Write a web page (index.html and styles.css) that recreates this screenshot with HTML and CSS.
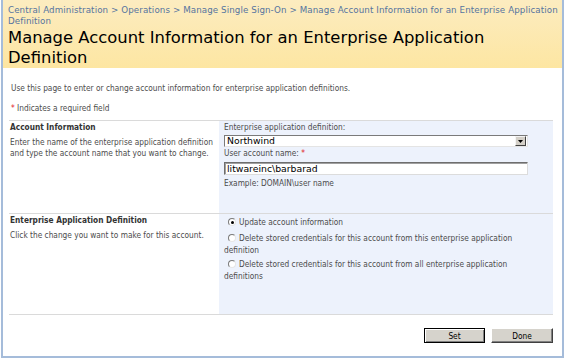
FILE: index.html
```html
<!DOCTYPE html>
<html>
<head>
<meta charset="utf-8">
<link rel="stylesheet" href="styles.css">
</head>
<body>
<div class="frame">
  <div class="header">
    <div class="crumbs">Central Administration &gt; Operations &gt; Manage Single Sign-On &gt; Manage Account Information for an Enterprise Application Definition</div>
    <h1 class="title">Manage Account Information for an Enterprise Application Definition</h1>
  </div>
  <div class="content">
    <p class="intro">Use this page to enter or change account information for enterprise application definitions.</p>
    <p class="req"><span class="star">*</span> Indicates a required field</p>
    <div class="section s1">
      <div class="desc">
        <div class="sec-title">Account Information</div>
        <div class="sec-text">Enter the name of the enterprise application definition and type the account name that you want to change.</div>
      </div>
      <div class="ctrl">
        <div class="lbl">Enterprise application definition:</div>
        <div class="select"><span class="sel-val">Northwind</span><span class="sel-btn"><svg width="5" height="3" viewBox="0 0 5 3"><path d="M0 0h5L2.5 3z" fill="#000"/></svg></span></div>
        <div class="lbl lbl2">User account name: <span class="star">*</span></div>
        <div class="input">litwareinc\barbarad</div>
        <div class="lbl ex">Example: DOMAIN\user name</div>
      </div>
    </div>
    <div class="section s2">
      <div class="desc">
        <div class="sec-title">Enterprise Application Definition</div>
        <div class="sec-text">Click the change you want to make for this account.</div>
      </div>
      <div class="ctrl radios">
        <div class="opt"><span class="radio on"></span>Update account information</div>
        <div class="opt opt2"><span class="radio"></span>Delete stored credentials for this account from this enterprise application definition</div>
        <div class="opt opt3"><span class="radio"></span>Delete stored credentials for this account from all enterprise application definitions</div>
      </div>
    </div>
    <div class="buttons">
      <button class="btn default">Set</button>
      <button class="btn">Done</button>
    </div>
  </div>
</div>
</body>
</html>
```

FILE: styles.css
```css
html, body {
  margin: 0;
  padding: 0;
  background: #fff;
}
body {
  width: 566px;
  height: 360px;
  overflow: hidden;
  font-family: "DejaVu Sans Condensed", "DejaVu Sans", sans-serif;
  font-size: 8.25px;
  color: #4c4c4c;
}
.frame {
  margin: 0 2px 0 1px;
  height: 356px;
  border: 2px solid #a5bcda;
  border-top: none;
  display: flex;
  flex-direction: column;
}
.header {
  background: linear-gradient(to bottom, #fcecc0, #fde6a2);
  padding: 5px 2px 1px 5px;
  height: 62px;
}
.crumbs {
  font-family: "DejaVu Sans", sans-serif;
  font-size: 8.7px;
  line-height: 10.5px;
  color: #55749f;
  letter-spacing: 0.1px;
}
.title {
  margin: 2px 0 0 0;
  font-family: "DejaVu Sans", sans-serif;
  font-weight: normal;
  font-size: 16.4px;
  line-height: 20px;
  color: #000;
}
.content {
  padding: 0 9px 0 6px;
  flex: 1;
}
.intro {
  margin: 15px 0 0 2px;
  line-height: 10px;
}
.req {
  margin: 10px 0 0 2px;
  line-height: 10px;
}
.star {
  color: #e0191f;
}
.section {
  display: grid;
  grid-template-columns: 210px 1fr;
  border-top: 1px solid #dadada;
}
.s1 {
  margin-top: 7px;
  height: 92px;
}
.s2 {
  height: 100px;
  border-bottom: 1px solid #dadada;
}
.desc {
  padding: 1px 0 0 1px;
}
.sec-title {
  font-weight: bold;
  color: #333;
  line-height: 11px;
}
.sec-text {
  margin-top: 4px;
  line-height: 11px;
  width: 208px;
}
.ctrl {
  background: #edf2fc;
  padding: 1px 25px 0 5px;
}
.lbl {
  line-height: 11px;
}
.select {
  margin-top: 2px;
  height: 10px;
  border: 1px solid;
  border-color: #7a7a7a #e4e4e4 #e4e4e4 #7a7a7a;
  background: #fff;
  display: flex;
  align-items: center;
  justify-content: space-between;
  padding-left: 2px;
}
.sel-val {
  font-family: "DejaVu Sans", sans-serif;
  font-size: 9.3px;
  line-height: 10px;
  color: #000;
}
.sel-btn {
  width: 9px;
  height: 8px;
  margin-right: 1px;
  background: #d4d0c8;
  border: 1px solid;
  border-color: #f4f4f4 #404040 #404040 #f4f4f4;
  display: flex;
  align-items: center;
  justify-content: center;
}
.lbl2 {
  margin-top: 1px;
}
.input {
  margin-top: 3px;
  height: 11px;
  border: 1px solid;
  border-color: #6e6e6e #dcdcdc #dcdcdc #6e6e6e;
  box-shadow: inset 1px 1px 0 #a0a0a0;
  background: #fff;
  padding-left: 2px;
  font-family: "DejaVu Sans", sans-serif;
  font-size: 9.3px;
  line-height: 11px;
  color: #000;
}
.ex {
  margin-top: 3px;
}
.radios {
  padding: 2px 20px 0 5px;
}
.opt {
  line-height: 12px;
}
.opt2 {
  margin-top: 4px;
}
.opt3 {
  margin-top: 2px;
}
.radio {
  display: inline-block;
  box-sizing: border-box;
  width: 8px;
  height: 8px;
  margin: 0 3px 0 4px;
  border-radius: 50%;
  border: 1px solid;
  border-color: #7a7a7a #e6e6e6 #e6e6e6 #7a7a7a;
  background: #fff;
  vertical-align: -1px;
  position: relative;
}
.radio.on::after {
  content: "";
  position: absolute;
  left: 1.5px;
  top: 1.5px;
  width: 3px;
  height: 3px;
  border-radius: 50%;
  background: #000;
}
.buttons {
  display: flex;
  justify-content: flex-end;
  gap: 6px;
  margin-top: 13px;
}
.btn {
  font-family: "DejaVu Sans Condensed", "DejaVu Sans", sans-serif;
  font-size: 8.25px;
  color: #000;
  height: 15px;
  padding: 0;
  background: #d6d3cc;
  border: 1px solid;
  border-color: #fff #404040 #404040 #fff;
  box-shadow: inset -1px -1px 0 #808080;
  width: 62px;
}
.btn.default {
  border: 1px solid #000;
  box-shadow: inset 1px 1px 0 #fff, inset -1px -1px 0 #808080;
  width: 61px;
}
```
